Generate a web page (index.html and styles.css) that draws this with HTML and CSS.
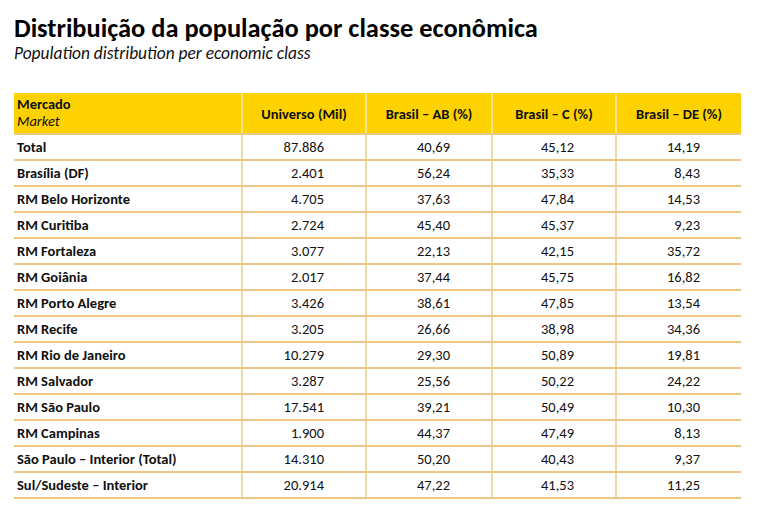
FILE: index.html
```html
<!DOCTYPE html>
<html lang="pt">
<head>
<meta charset="utf-8">
<link rel="stylesheet" href="styles.css">
</head>
<body>
<div class="page">
  <h1 class="title">Distribuição da população por classe econômica</h1>
  <p class="subtitle">Population distribution per economic class</p>
  <table class="data">
    <colgroup>
      <col class="c1"><col class="c2"><col class="c3"><col class="c4"><col class="c5">
    </colgroup>
    <thead>
      <tr>
        <th class="first"><span class="hl">Mercado</span><em class="hl">Market</em></th>
        <th>Universo (Mil)</th>
        <th>Brasil – AB (%)</th>
        <th>Brasil – C (%)</th>
        <th>Brasil – DE (%)</th>
      </tr>
    </thead>
    <tbody>
      <tr><td>Total</td><td>87.886</td><td>40,69</td><td>45,12</td><td>14,19</td></tr>
      <tr><td>Brasília (DF)</td><td>2.401</td><td>56,24</td><td>35,33</td><td>8,43</td></tr>
      <tr><td>RM Belo Horizonte</td><td>4.705</td><td>37,63</td><td>47,84</td><td>14,53</td></tr>
      <tr><td>RM Curitiba</td><td>2.724</td><td>45,40</td><td>45,37</td><td>9,23</td></tr>
      <tr><td>RM Fortaleza</td><td>3.077</td><td>22,13</td><td>42,15</td><td>35,72</td></tr>
      <tr><td>RM Goiânia</td><td>2.017</td><td>37,44</td><td>45,75</td><td>16,82</td></tr>
      <tr><td>RM Porto Alegre</td><td>3.426</td><td>38,61</td><td>47,85</td><td>13,54</td></tr>
      <tr><td>RM Recife</td><td>3.205</td><td>26,66</td><td>38,98</td><td>34,36</td></tr>
      <tr><td>RM Rio de Janeiro</td><td>10.279</td><td>29,30</td><td>50,89</td><td>19,81</td></tr>
      <tr><td>RM Salvador</td><td>3.287</td><td>25,56</td><td>50,22</td><td>24,22</td></tr>
      <tr><td>RM São Paulo</td><td>17.541</td><td>39,21</td><td>50,49</td><td>10,30</td></tr>
      <tr><td>RM Campinas</td><td>1.900</td><td>44,37</td><td>47,49</td><td>8,13</td></tr>
      <tr><td>São Paulo – Interior (Total)</td><td>14.310</td><td>50,20</td><td>40,43</td><td>9,37</td></tr>
      <tr><td>Sul/Sudeste – Interior</td><td>20.914</td><td>47,22</td><td>41,53</td><td>11,25</td></tr>
    </tbody>
  </table>
</div>
</body>
</html>
```

FILE: styles.css
```css
* { box-sizing: border-box; }
html, body { margin: 0; padding: 0; background: #fff; }
body {
  font-family: Carlito, Calibri, Lato, "Open Sans", sans-serif;
  color: #111;
}
.page {
  padding: 13px 18px 0 14px;
}
.title {
  margin: 0;
  font-size: 26.4px;
  line-height: 30px;
  font-weight: 700;
  color: #000;
}
.subtitle {
  margin: 0;
  font-size: 17.4px;
  line-height: 20px;
  font-style: italic;
  color: #111;
}
.data {
  margin-top: 30px;
  width: 727px;
  border-collapse: collapse;
  table-layout: fixed;
  font-size: 14.5px;
}
.c1 { width: 228px; }
.c2 { width: 124px; }
.c3 { width: 126px; }
.c4 { width: 124px; }
.c5 { width: 125px; }
.data th {
  background: #fdd200;
  height: 41px;
  padding: 2px 0 0;
  font-weight: 700;
  text-align: center;
  line-height: 16px;
  border-left: 2px solid #fbe487;
  border-bottom: 2px solid #ebc984;
}
.data th.first {
  text-align: left;
  padding: 0 0 0 3px;
  border-left: none;
}
.hl {
  display: block;
  line-height: 17px;
}
.data th em { font-weight: 400; }
.data td {
  height: 26px;
  padding: 0 41px 0 0;
  text-align: right;
  border-bottom: 2px solid #ebc984;
  border-left: 2px solid #f0d9a4;
}
.data td:first-child {
  text-align: left;
  font-weight: 700;
  padding-left: 3px;
  border-left: none;
}
```
